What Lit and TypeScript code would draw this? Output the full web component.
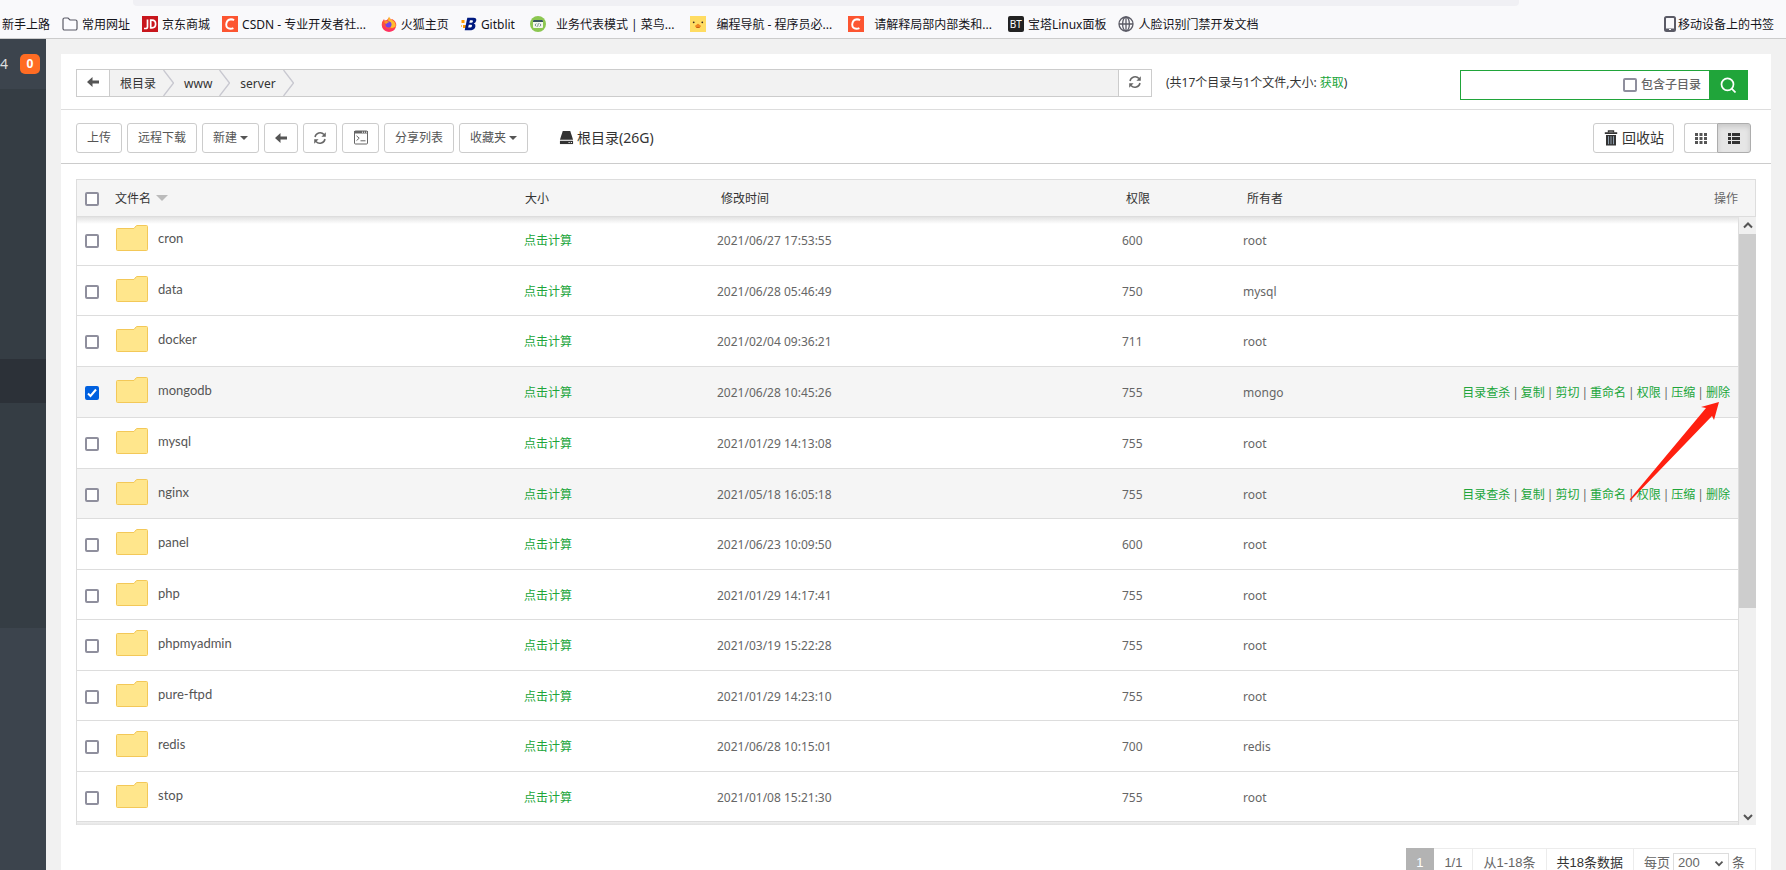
import { LitElement, html, css, svg, nothing } from "lit";
import { customElement, state } from "lit/decorators.js";

interface Entry {
  name: string;
  time: string;
  mode: string;
  owner: string;
  actions?: boolean;
}

const ENTRIES: Entry[] = [
  { name: "cron", time: "2021/06/27 17:53:55", mode: "600", owner: "root" },
  { name: "data", time: "2021/06/28 05:46:49", mode: "750", owner: "mysql" },
  { name: "docker", time: "2021/02/04 09:36:21", mode: "711", owner: "root" },
  { name: "mongodb", time: "2021/06/28 10:45:26", mode: "755", owner: "mongo", actions: true },
  { name: "mysql", time: "2021/01/29 14:13:08", mode: "755", owner: "root" },
  { name: "nginx", time: "2021/05/18 16:05:18", mode: "755", owner: "root", actions: true },
  { name: "panel", time: "2021/06/23 10:09:50", mode: "600", owner: "root" },
  { name: "php", time: "2021/01/29 14:17:41", mode: "755", owner: "root" },
  { name: "phpmyadmin", time: "2021/03/19 15:22:28", mode: "755", owner: "root" },
  { name: "pure-ftpd", time: "2021/01/29 14:23:10", mode: "755", owner: "root" },
  { name: "redis", time: "2021/06/28 10:15:01", mode: "700", owner: "redis" },
  { name: "stop", time: "2021/01/08 15:21:30", mode: "755", owner: "root" },
];

const ACTIONS = ["目录查杀", "复制", "剪切", "重命名", "权限", "压缩", "删除"];

const ICONS = {
  folderOutline: svg`<path d="M1 3.500a1.500 1.500 0 0 1 1.500-1.500h3.500l2 2h5.500a1.500 1.500 0 0 1 1.500 1.500v7a1.500 1.500 0 0 1-1.500 1.500h-11a1.500 1.500 0 0 1-1.500-1.500z" fill="#fbfbfe" stroke="#5b5b66" stroke-width="1.200"/>`,
  jd: svg`<rect width="16" height="16" fill="#c8161d"/><path d="M5.500 3.500v7.200q0 1.800-1.800 1.800H2M8.700 4.200v7.600h1.300q3.600 0 3.600-3.800t-3.600-3.800z" fill="none" stroke="#fff" stroke-width="1.700"/>`,
  csdn: svg`<rect width="16" height="16" fill="#fc5531"/><path d="M12 4.200Q10.800 3.200 9 3.200 4.500 3.600 4.200 8.600 4.300 12.700 8.400 12.800q1.700 0 3-.7" fill="none" stroke="#fff" stroke-width="1.900"/>`,
  firefox: svg`<path d="M8 1.500q1.500 1 2 2.200l1-.7q4.500 2.300 4.300 6.300Q14.500 15.500 8 15.700 1.300 15.300.7 9 .6 5.500 3 3l.6 1.600Q6.500 4.500 8 1.500z" fill="#ff4f3d"/><path d="M8 0.500q.5 2.500 3 3.500 4 2.300 3.600 6.500Q11 13 9 11q3-4-1.700-6.300Q7 2.500 8 .5z" fill="#ffbd2e"/><path d="M1 8q.5 7 7 7.700 5-.3 6.500-4.200-3 3-7 1.800Q2.500 11.500 1 8z" fill="#ff2d6a"/><circle cx="7.500" cy="8.600" r="3" fill="#7542e5"/><path d="M3 5.500q3-1.500 5.200.7-2.200.2-2.500 1.600Q3.700 8 3 5.500z" fill="#ff9a1f"/>`,
  gitblit: svg`<path d="M.5 4h3v3h-3zM2 9h3v3H2z" fill="#ff9a00"/><path d="M0 9h1v2H0z" fill="#ffbe55"/><path d="M6.300 1.800h6.200q3.400.2 2.700 3-.5 2-2.400 2.700 2.100.7 1.600 3.100-.6 3.300-4.100 3.600H3.700z" fill="#001a80"/><path d="M9 4.300h2q1.100.1.900 1.100-.3 1.300-1.500 1.300H8.300zM7.800 8.700h2.300q1.100.1.900 1.300-.3 1.600-1.800 1.600H7.100z" fill="#fff"/>`,
  runoob: svg`<circle cx="8" cy="8" r="8" fill="#8cc751"/><rect x="3" y="4" width="10" height="8" rx="1" fill="#f4f8ee"/><path d="M3 5q0-1 1-1h8q1 0 1 1v1H3z" fill="#36545e"/><path d="M6.300 7.500L5 9l1.300 1.500M9.700 7.500L11 9l-1.300 1.500M8.400 7.300l-.8 3.400" stroke="#53707a" stroke-width=".8" fill="none"/>`,
  duck: svg`<rect width="16" height="16" fill="#ffdc62"/><circle cx="3.700" cy="6.300" r=".9" fill="#3b2a22"/><circle cx="12.300" cy="6.300" r=".9" fill="#3b2a22"/><path d="M4.800 10q1-1 2-1.500 1.200-1.300 2.400 0 1 .5 2 1.500-1.200 2-3.200 2t-3.200-2z" fill="#f0851f"/><path d="M5.800 11h4.400l-1.100 1H6.900z" fill="#c95e12"/>`,
  globe: svg`<g fill="none" stroke="#5b5b66" stroke-width="1.300"><circle cx="8" cy="8" r="7"/><ellipse cx="8" cy="8" rx="3.400" ry="7"/><path d="M1 8h14M8 1v14"/></g>`,
  phone: svg`<rect x="3" y="1" width="10" height="14" rx="1.500" fill="none" stroke="#5b5b66" stroke-width="2"/><path d="M3 12.500h10v2H3z" fill="#5b5b66"/><path d="M7 13.500h2" stroke="#fff" stroke-width="1"/>`,
  left: svg`<path d="M2 8l5.500-5v3.500H14v3H7.500V13z" fill="#555"/>`,
  refresh: svg`<g fill="none" stroke="#666" stroke-width="1.500"><path d="M3 7A5.200 5.200 0 0 1 12 4.500M13 9A5.200 5.200 0 0 1 4 11.500"/></g><path d="M13.800 2.300v4.400H9.400zM2.200 13.700V9.300h4.400z" fill="#666"/>`,
  terminal: svg`<rect x="1.500" y="1" width="13" height="13" rx="1" fill="none" stroke="#666" stroke-width="1"/><path d="M1 1h14v2.500H1z" fill="#666"/><path d="M9 2.200h1M11 2.200h1M13 2.200h1" stroke="#fff" stroke-width="1"/><path d="M3.500 5.800l2.700 2.400-2.700 2.400M7.500 10.800h5" fill="none" stroke="#666" stroke-width="1"/>`,
  drive: svg`<path d="M4 1h8l3 9.500H1z" fill="#333"/><path d="M1 11.500h14V15H1z" fill="#333"/><path d="M10.200 13.300h1.200M12.600 13.300h1.200" stroke="#fff" stroke-width="1.200"/>`,
  search: svg`<g fill="none" stroke="#fff" stroke-width="1.700"><circle cx="7.500" cy="7.300" r="6"/><path d="M11.700 11.700l3.800 3.800"/></g>`,
  trash: svg`<path d="M5.500 2.500V1h5v1.500" fill="none" stroke="#333" stroke-width="1.400"/><path d="M1.800 2.300h12.400v1.700H1.800zM3 5h10v10.500H3z" fill="#333"/><path d="M5.500 6.200v8M8 6.200v8M10.500 6.200v8" stroke="#9ab" stroke-width=".9"/>`,
  grid: svg`<path d="M2 3h3v3H2zM6.500 3h3v3h-3zM11 3h3v3h-3zM2 7h3v3H2zM6.500 7h3v3h-3zM11 7h3v3h-3zM2 11h3v3H2zM6.500 11h3v3h-3zM11 11h3v3h-3z" fill="#555"/>`,
  list: svg`<path d="M2 3h3v3H2zM6 3h8v3H6zM2 7h3v3H2zM6 7h8v3H6zM2 11h3v3H2zM6 11h8v3H6z" fill="#333"/>`,
  up: svg`<path d="M4 10l4-4 4 4" fill="none" stroke="#555" stroke-width="2"/>`,
  down: svg`<path d="M4 6.500l4 4 4-4" fill="none" stroke="#555" stroke-width="2"/>`,
};

const icon = (shape: unknown) =>
  html`<svg class="icon" viewBox="0 0 16 16" aria-hidden="true">${shape}</svg>`;

const BOOKMARKS: { label: string; mark?: unknown; kind?: string }[] = [
  { label: "新手上路" },
  { label: "常用网址", mark: icon(ICONS.folderOutline) },
  { label: "京东商城", mark: icon(ICONS.jd) },
  { label: "CSDN - 专业开发者社...", mark: icon(ICONS.csdn), kind: "latin" },
  { label: "火狐主页", mark: icon(ICONS.firefox) },
  { label: "Gitblit", mark: icon(ICONS.gitblit), kind: "latin" },
  { label: "业务代表模式 | 菜鸟...", mark: icon(ICONS.runoob), kind: "wide" },
  { label: "编程导航 - 程序员必...", mark: icon(ICONS.duck), kind: "wide" },
  { label: "请解释局部内部类和...", mark: icon(ICONS.csdn), kind: "wide" },
  { label: "宝塔Linux面板", mark: html`<span class="bt">BT</span>` },
  { label: "人脸识别门禁开发文档", mark: icon(ICONS.globe) },
];

@customElement("app-root")
export class AppRoot extends LitElement {
  @state() private selected = new Set<string>(["mongodb"]);

  static styles = css`
    :host {
      display: flex;
      flex-direction: column;
      height: 100vh;
      overflow: hidden;
      background: #f1f1f1;
      color: #666;
      font: 12px/16px "Noto Sans", "Noto Sans CJK SC", sans-serif;
    }
    * { box-sizing: border-box; }
    a { color: inherit; text-decoration: none; }
    button, input, select { font: inherit; color: inherit; margin: 0; }
    button { cursor: pointer; }
    .icon { width: 16px; height: 16px; flex: none; display: block; }

    .browser { flex: none; height: 39px; background: #f9f9fb; border-bottom: 1px solid #ccc; }
    .address { height: 6px; margin: 0 267px 0 133px; background: #f0f0f4; border-radius: 0 0 4px 4px; }
    .bookmarks { display: flex; align-items: center; height: 36px; padding: 0 12px 0 2px; color: #15141a; white-space: nowrap; gap: 12px; }
    .bookmark { display: flex; align-items: center; gap: 4px; }
    .bookmark > span:last-child { padding-top: 2px; }
    .bookmark.latin { margin-right: 3px; }
    .bookmark.wide { gap: 10px; margin-right: 4px; }
    .mobile { margin-left: auto; gap: 0; }
    .bt { width: 16px; height: 16px; border-radius: 2px; background: #222; color: #fff; font-size: 10px; text-align: center; }

    .body { flex: 1; display: flex; min-height: 0; }
    .side { flex: none; width: 46px; display: flex; flex-direction: column; background: #3c444d; }
    .side-top { height: 50px; display: flex; align-items: center; gap: 12px; color: #ddd; font-size: 14px; }
    .badge { width: 20px; height: 20px; border-radius: 5px; background: #ff6c23; color: #fff; font: bold 12px/20px "Noto Sans", sans-serif; text-align: center; }
    .menu { height: 539px; background: #353d44; padding-top: 270px; }
    .menu-active { display: block; height: 44px; background: #2c3138; }

    .panel { flex: 1; min-width: 0; margin: 15px 15px 0; background: #fff; }
    .row { display: flex; align-items: center; padding: 0 20px 0 15px; }
    .pathrow { height: 56px; border-bottom: 1px solid #ddd; padding: 3px 23px 0 15px; }
    .toolrow { height: 54px; border-bottom: 1px solid #ccc; gap: 5px; padding-top: 2px; }

    .path { flex: 0 1 1076px; display: flex; height: 28px; border: 1px solid #ccc; background: #f2f2f2; color: #333; }
    .path button { flex: none; width: 33px; border: 0; background: #fff; padding: 0 0 2px; display: grid; place-items: center; }
    .path .back { border-right: 1px solid #ccc; }
    .path .reload { border-left: 1px solid #ccc; margin-left: auto; }
    .crumbs { display: flex; margin: 0; padding: 0; list-style: none; }
    .crumb { display: flex; align-items: center; padding-left: 10px; gap: 7px; }
    .crumb a { padding-top: 2px; }
    .chevron { width: 11px; height: 26px; display: block; }
    .info { margin-left: 14px; color: #333; white-space: nowrap; }
    .green { color: #20a53a; }
    .search { margin: 4px 0 0 auto; width: 288px; height: 30px; display: flex; border: 1px solid #20a53a; }
    .search .term { flex: 1; min-width: 0; border: 0; outline: 0; background: none; }
    .search label { display: flex; align-items: center; gap: 4px; padding-right: 8px; font-weight: 500; white-space: nowrap; }
    .search button { width: 38px; border: 0; background: #20a53a; padding: 0; display: grid; place-items: center; }

    .check { appearance: none; flex: none; display: block; width: 14px; height: 14px; border: 2px solid #8f8f9d; border-radius: 2px; background: #fff; }
    .check:checked { border-color: #0060df; background: #0060df url("data:image/svg+xml,%3Csvg xmlns='http://www.w3.org/2000/svg' viewBox='0 0 10 10'%3E%3Cpath d='M1 5.500l2.500 2.500L9 1.500' fill='none' stroke='white' stroke-width='2'/%3E%3C/svg%3E"); }

    .btn { height: 30px; flex: none; padding: 0 10px; border: 1px solid #ccc; border-radius: 3px; background: #fff; color: #555; display: flex; align-items: center; justify-content: center; gap: 3px; white-space: nowrap; }
    .btn.square { width: 34px; padding: 0; }
    .btn.term-btn { width: 37px; }
    .caret { border: 4px solid transparent; border-top-color: currentColor; border-bottom: 0; }
    .drive { display: flex; align-items: center; gap: 3px; margin-left: 26px; color: #333; font-size: 14px; }
    .drive .icon { width: 15px; height: 15px; }
    .recycle { margin-left: auto; margin-right: 5px; padding: 0 9px; color: #333; font-size: 14px; }
    .toggle { display: flex; }
    .toggle .btn:first-child { width: 33px; border-radius: 3px 0 0 3px; border-right: 0; }
    .toggle .btn:last-child { border-radius: 0 3px 3px 0; background: #e6e6e6; border-color: #adadad; box-shadow: inset 0 3px 5px rgba(0, 0, 0, 0.125); }

    .files { margin: 15px 15px 0; border-left: 1px solid #ddd; position: relative; }
    table { width: 100%; border-collapse: collapse; table-layout: fixed; }
    th, td { padding: 0; text-align: left; font-weight: 400; white-space: nowrap; }
    .c-check { width: 37px; }
    .c-name { width: 410px; }
    .c-size { width: 193px; }
    .c-time { width: 405px; }
    .c-mode { width: 121px; }
    .c-owner { width: 180px; }
    .head { border: 1px solid #ddd; border-left: 0; background: #f5f5f5; color: #333; }
    .head th { height: 36px; padding: 2px 0 0 4px; }
    .head th:nth-child(-n + 3) { padding-left: 1px; }
    .head th:first-child, td:first-child { padding-left: 8px; }
    .head th:last-child { text-align: right; padding-right: 17px; color: #666; }
    .sort { display: inline-block; margin: 0 0 2px 5px; border: 6px solid transparent; border-top-color: #bbb; border-bottom: 0; }
    .view { display: flex; height: 608px; overflow: hidden; position: relative; }
    .view::before { content: ""; position: absolute; inset: 0 17px auto 0; height: 7px; background: linear-gradient(#e2e2e2, rgba(228, 228, 228, 0)); }
    .list { flex: 1; min-width: 0; display: flex; flex-direction: column; border-right: 1px solid #ddd; }
    .list table { flex: none; }
    tbody tr { height: 51px; border-bottom: 1px solid #ddd; }
    tbody tr:nth-child(even) { height: 50px; }
    tbody tr:first-child { height: 48px; }
    tbody tr:nth-child(4) { height: 51px; }
    tbody tr.hot { background: #f5f5f5; }
    tbody td { padding-top: 3px; }
    tbody tr:first-child td { padding-top: 0; }
    .name { display: flex; align-items: center; gap: 10px; padding: 0 0 6px 2px; color: #555; font: 13px/18px Lato, "Noto Sans", sans-serif; }
    .folder { width: 32px; height: 26px; display: block; }
    .acts { display: flex; justify-content: flex-end; gap: 2px; padding-right: 8px; }
    .tail { flex: 1; background: linear-gradient(#f0f0f0, #e2e2e2); }
    .scroll { flex: none; width: 17px; display: flex; flex-direction: column; background: #f0f0f0; }
    .scroll .icon { margin: 0 auto; height: 17px; }
    .thumb { height: 374px; background: #cdcdcd; }
    .space { flex: 1; }

    .arrow { position: absolute; right: 36px; top: 222px; width: 92px; height: 100px; pointer-events: none; }

    .pages { display: flex; justify-content: flex-end; margin: 23px 15px 0; font: 13px/16px "Liberation Sans", "Noto Sans CJK SC", sans-serif; }
    .page { height: 30px; display: flex; align-items: center; border: 1px solid #ececec; border-left: 0; padding: 0 10px; white-space: nowrap; }
    .page.now { background: #b3b3b3; border-color: #b3b3b3; color: #fff; }
    .page.total { color: #333; }
    .page select { appearance: none; width: 56px; height: 20px; margin: 0 3px; padding: 0 4px; border: 1px solid #ddd; border-radius: 0; background: #fff; }
    .pick { display: flex; align-items: center; position: relative; }
    .pick .icon { position: absolute; right: 6px; width: 14px; height: 14px; pointer-events: none; }
  `;

  private toggle(name: string) {
    const next = new Set(this.selected);
    if (!next.delete(name)) next.add(name);
    this.selected = next;
  }

  private cols() {
    return html`<colgroup>
      <col class="c-check" /><col class="c-name" /><col class="c-size" />
      <col class="c-time" /><col class="c-mode" /><col class="c-owner" /><col />
    </colgroup>`;
  }

  private renderEntry(e: Entry) {
    return html`<tr class=${e.actions ? "hot" : ""}>
      <td><input class="check" type="checkbox" aria-label=${e.name}
        .checked=${this.selected.has(e.name)} @change=${() => this.toggle(e.name)} /></td>
      <td><a class="name" href="#">
        <svg class="folder" viewBox="0 0 32 26" aria-hidden="true">
          <path d="M.5 4.500q0-1 1-1H18l2-2.500q.5-.5 1-.5h9.500q1 0 1 1v23q0 1-1 1h-29q-1 0-1-1z" fill="#ffe68c" stroke="#f3c858"/>
        </svg>${e.name}</a></td>
      <td><a class="green" href="#">点击计算</a></td>
      <td>${e.time}</td>
      <td>${e.mode}</td>
      <td>${e.owner}</td>
      <td>${e.actions
        ? html`<div class="acts">${ACTIONS.map((a, i) =>
            html`${i ? html`<span>|</span>` : nothing}<a class="green" href="#">${a}</a>`)}</div>`
        : nothing}</td>
    </tr>`;
  }

  render() {
    return html`
      <header class="browser">
        <div class="address"></div>
        <nav class="bookmarks">
          ${BOOKMARKS.map((b) => html`<a class="bookmark ${b.kind ?? ""}" href="#">${b.mark ?? nothing}<span>${b.label}</span></a>`)}
          <a class="bookmark mobile" href="#">${icon(ICONS.phone)}<span>移动设备上的书签</span></a>
        </nav>
      </header>
      <div class="body">
        <aside class="side">
          <div class="side-top"><span>4</span><span class="badge">0</span></div>
          <nav class="menu"><a class="menu-active" href="#" aria-label="文件"></a></nav>
        </aside>
        <main class="panel">
          <div class="row pathrow">
            <div class="path">
              <button class="back" aria-label="返回">${icon(ICONS.left)}</button>
              <ol class="crumbs">
                ${["根目录", "www", "server"].map((c) => html`<li class="crumb"><a href="#">${c}</a>
                  <svg class="chevron" viewBox="0 0 11 26" aria-hidden="true"><path d="M.5 0l10 13-10 13" fill="none" stroke="#c8c8d0" stroke-width="1.300"/></svg></li>`)}
              </ol>
              <button class="reload" aria-label="刷新">${icon(ICONS.refresh)}</button>
            </div>
            <div class="info">(共17个目录与1个文件,大小: <a class="green" href="#">获取</a>)</div>
            <form class="search" @submit=${(e: Event) => e.preventDefault()}>
              <input class="term" type="text" aria-label="搜索" />
              <label><input class="check" type="checkbox" />包含子目录</label>
              <button aria-label="搜索">${icon(ICONS.search)}</button>
            </form>
          </div>
          <div class="row toolrow">
            <button class="btn">上传</button>
            <button class="btn">远程下载</button>
            <button class="btn">新建<span class="caret"></span></button>
            <button class="btn square" aria-label="后退">${icon(ICONS.left)}</button>
            <button class="btn square" aria-label="刷新">${icon(ICONS.refresh)}</button>
            <button class="btn square term-btn" aria-label="终端">${icon(ICONS.terminal)}</button>
            <button class="btn">分享列表</button>
            <button class="btn">收藏夹<span class="caret"></span></button>
            <a class="drive" href="#">${icon(ICONS.drive)}<span>根目录(26G)</span></a>
            <button class="btn recycle">${icon(ICONS.trash)}回收站</button>
            <div class="toggle">
              <button class="btn square" aria-label="网格">${icon(ICONS.grid)}</button>
              <button class="btn square" aria-label="列表">${icon(ICONS.list)}</button>
            </div>
          </div>
          <section class="files">
            <div class="head"><table>
              ${this.cols()}
              <thead><tr>
                <th><input class="check" type="checkbox" aria-label="全选" /></th>
                <th>文件名<span class="sort"></span></th>
                <th>大小</th><th>修改时间</th><th>权限</th><th>所有者</th><th>操作</th>
              </tr></thead>
            </table></div>
            <div class="view">
              <div class="list">
                <table>${this.cols()}<tbody>${ENTRIES.map((e) => this.renderEntry(e))}</tbody></table>
                <div class="tail"></div>
              </div>
              <div class="scroll">${icon(ICONS.up)}<div class="thumb"></div><div class="space"></div>${icon(ICONS.down)}</div>
            </div>
            <svg class="arrow" viewBox="0 0 92 100" aria-hidden="true">
              <path d="M91 1L86 19l-2-4L3 99q-2 1-1-1L78 7l-5-1z" fill="#ff2010"/>
            </svg>
          </section>
          <div class="pages">
            <span class="page now">1</span>
            <span class="page">1/1</span>
            <span class="page">从1-18条</span>
            <span class="page total">共18条数据</span>
            <label class="page">每页<span class="pick"><select><option>200</option></select>${icon(ICONS.down)}</span>条</label>
          </div>
        </main>
      </div>`;
  }
}
